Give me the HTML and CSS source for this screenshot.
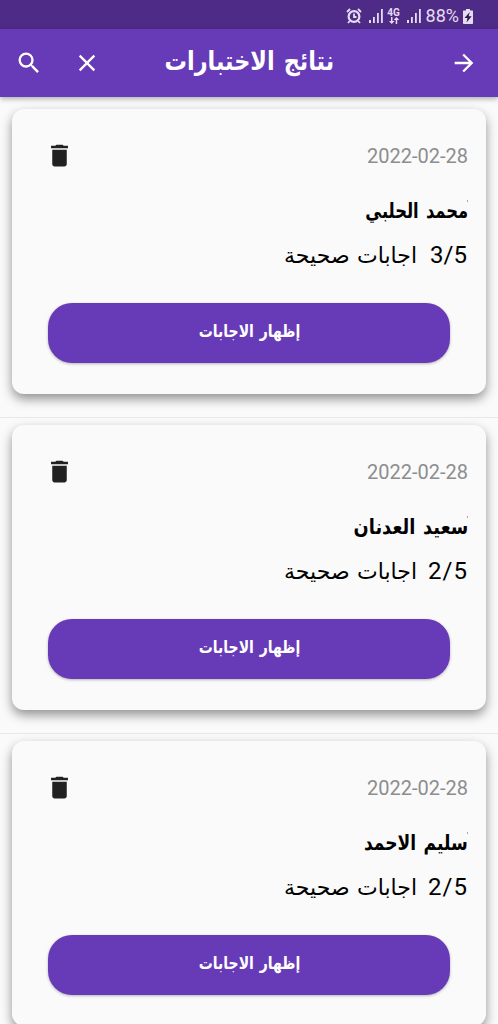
FILE: index.html
```html
<!DOCTYPE html>
<html lang="ar" dir="rtl">
<head>
<meta charset="utf-8">
<title>نتائج الاختبارات</title>
<link rel="stylesheet" href="styles.css">
</head>
<body>
<svg class="defs" width="0" height="0" aria-hidden="true">
  <symbol id="trash" viewBox="0 0 24 24"><path d="M6 19c0 1.100.9 2 2 2h8c1.100 0 2-.9 2-2V7.300H6V19zM19 4h-3.500l-1-1h-5l-1 1H5v2h14V4z"/></symbol>
  <symbol id="bars" viewBox="0 0 14 14"><path d="M0 11h2v3H0zM4 8h1.800v6H4zM8 4h1.800v10H8zM12 0h1.800v14H12z"/></symbol>
</svg>
<div class="status" dir="ltr">
  <svg class="alarm" viewBox="0 0 16 16"><circle cx="8" cy="8.500" r="5.400" fill="none" stroke="currentColor" stroke-width="2.200"/><path d="M8 5.500V9H10.500M1 4L4 1M15 4L12 1M3.800 13L2 15M12.200 13L14 15" fill="none" stroke="currentColor" stroke-width="1.800"/></svg>
  <svg class="signal"><use href="#bars"/></svg>
  <div class="net"><span>4G</span><svg viewBox="0 0 10 7"><path d="M0 4h2V0h1.500v4h2L2.750 7zM4.700 3L7.450 0l2.750 3H8.200v4H6.700V3z"/></svg></div>
  <svg class="signal"><use href="#bars"/></svg>
  <span class="percent">88%</span>
  <svg class="battery" viewBox="0 0 10 15"><path fill="currentColor" d="M3 0h4v1.500h2.200q.8 0 .8.800v11.900q0 .8-.8.800H.8Q0 15 0 14.200V2.300q0-.8.8-.8H3z"/><path fill="#2c1650" d="M6.800 3L1.500 9h3l-1 4.500L8.700 7.300H5.600z"/></svg>
</div>
<header class="appbar">
  <svg class="icon back" viewBox="0 0 24 24"><path d="M12 4l-1.410 1.410L16.170 11H4v2h12.170l-5.580 5.590L12 20l8-8z"/></svg>
  <h1><span>نتائج الاختبارات</span></h1>
  <svg class="icon close" viewBox="0 0 24 24"><path d="M19 6.410L17.590 5 12 10.590 6.410 5 5 6.410 10.590 12 5 17.590 6.410 19 12 13.410 17.590 19 19 17.590 13.410 12z"/></svg>
  <svg class="icon search" viewBox="0 0 24 24"><path d="M15.500 14h-.79l-.28-.27A6.470 6.470 0 0 0 16 9.500 6.500 6.500 0 1 0 9.500 16c1.610 0 3.090-.59 4.230-1.570l.27.280v.79l5 4.990L20.490 19l-4.990-5zm-6 0a4.500 4.500 0 1 1 0-9 4.500 4.500 0 0 1 0 9z"/></svg>
</header>
<main class="list">
  <section class="item"><article class="card">
    <div class="top"><time>2022-02-28</time><svg class="trash"><use href="#trash"/></svg></div>
    <h2><span class="n1">محمد الحلبي</span></h2>
    <p class="score"><b>3/5</b><span>اجابات صحيحة</span></p>
    <button><span>إظهار الاجابات</span></button>
  </article></section>
  <section class="item"><article class="card">
    <div class="top"><time>2022-02-28</time><svg class="trash"><use href="#trash"/></svg></div>
    <h2><span class="n2">سعيد العدنان</span></h2>
    <p class="score wide"><b>2/5</b><span>اجابات صحيحة</span></p>
    <button><span>إظهار الاجابات</span></button>
  </article></section>
  <section class="item"><article class="card">
    <div class="top"><time>2022-02-28</time><svg class="trash"><use href="#trash"/></svg></div>
    <h2><span class="n3">سليم الاحمد</span></h2>
    <p class="score wide"><b>2/5</b><span>اجابات صحيحة</span></p>
    <button><span>إظهار الاجابات</span></button>
  </article></section>
</main>
</body>
</html>
```
FILE: styles.css
```css
* { box-sizing: border-box; }
body { margin: 0; height: 1024px; overflow: hidden; background: #fafafa; color: #000; font-family: Roboto, "DejaVu Sans", sans-serif; display: flex; flex-direction: column; }
svg { display: block; fill: currentColor; flex: none; }
.defs { position: absolute; }
h1, h2, p { margin: 0; }
h1 span, h2 span, .score span, button span { display: inline-block; white-space: nowrap; }
.status { height: 29px; flex: none; background: #4e2b87; color: #e6dcf2; display: flex; align-items: center; padding: 3px 25px 0 0; justify-content: flex-end; }
.alarm { width: 16px; height: 16px; margin-right: 7px; }
.signal { width: 14px; height: 14px; }
.net { width: 12px; margin: 0 7px 0 5px; display: flex; flex-direction: column; align-items: center; font: bold 10px/8px Roboto, sans-serif; }
.net svg { width: 10px; height: 7px; }
.percent { font-size: 18px; line-height: 20px; margin: 0 4px 0 5px; }
.battery { width: 10px; height: 15px; }
.appbar { height: 68px; flex: none; background: #673ab7; color: #fff; display: flex; align-items: center; padding: 0 20px 0 15px; box-shadow: 0 2px 5px rgba(0,0,0,.3); z-index: 1; }
.icon { width: 28px; height: 28px; }
.appbar h1 { flex: 1; font-size: 26px; line-height: 36px; font-weight: 700; padding: 0 116px 5px 0; white-space: nowrap; width: 0; }
.appbar h1 span { transform-origin: right center; word-spacing: 4px; transform: scaleX(.86); }
.close { margin-left: 30px; }
.list { padding-top: 4px; flex: 1; overflow: hidden; }
.item { height: 316px; padding: 7px 12px 22px; border-top: 1px solid #e8e8e8; overflow: hidden; }
.item:first-child { border-top-color: transparent; }
.card { height: 285px; border-radius: 12px; background: #fafafa; box-shadow: 0 5px 11px rgba(0,0,0,.42); padding: 33px 18px 0 36px; display: flex; flex-direction: column; }
.top { display: flex; justify-content: space-between; align-items: center; height: 28px; }
time { color: #8d8d8d; font-size: 20px; }
.trash { width: 29px; height: 29px; margin: -1px 0 0 -3px; color: #212121; }
h2 { font-size: 21px; line-height: 30px; height: 30px; margin-top: 26px; font-weight: 700; display: flex; background: linear-gradient(#aaa, #aaa) right 4px / 1px 2px no-repeat; }
h2 span, .score span { transform-origin: right center; }
h2 span { word-spacing: 4px; }
.n1 { transform: scaleX(.778); }
.n2 { transform: scaleX(.848); }
.n3 { transform: scaleX(.812); }
.score { font-size: 24px; line-height: 32px; height: 32px; margin: 13px 1px 0 0; display: flex; }
.score b { font-weight: 400; width: 37px; direction: ltr; display: flex; justify-content: flex-end; }
.wide b { letter-spacing: 1px; margin-right: -1px; width: 38px; }
.score span { font-size: 22px; margin-right: 13px; word-spacing: 2px; line-height: 34px; }
button { border: 0; width: 402px; height: 60px; border-radius: 24px; margin: 32px 18px 0 0; padding: 0 0 5px; background: #673ab7; color: #fff; font: 700 17.5px Roboto, "DejaVu Sans", sans-serif; box-shadow: 0 1px 3px rgba(0,0,0,.28); }
button span { word-spacing: 3px; transform: scaleX(.8); }
```
